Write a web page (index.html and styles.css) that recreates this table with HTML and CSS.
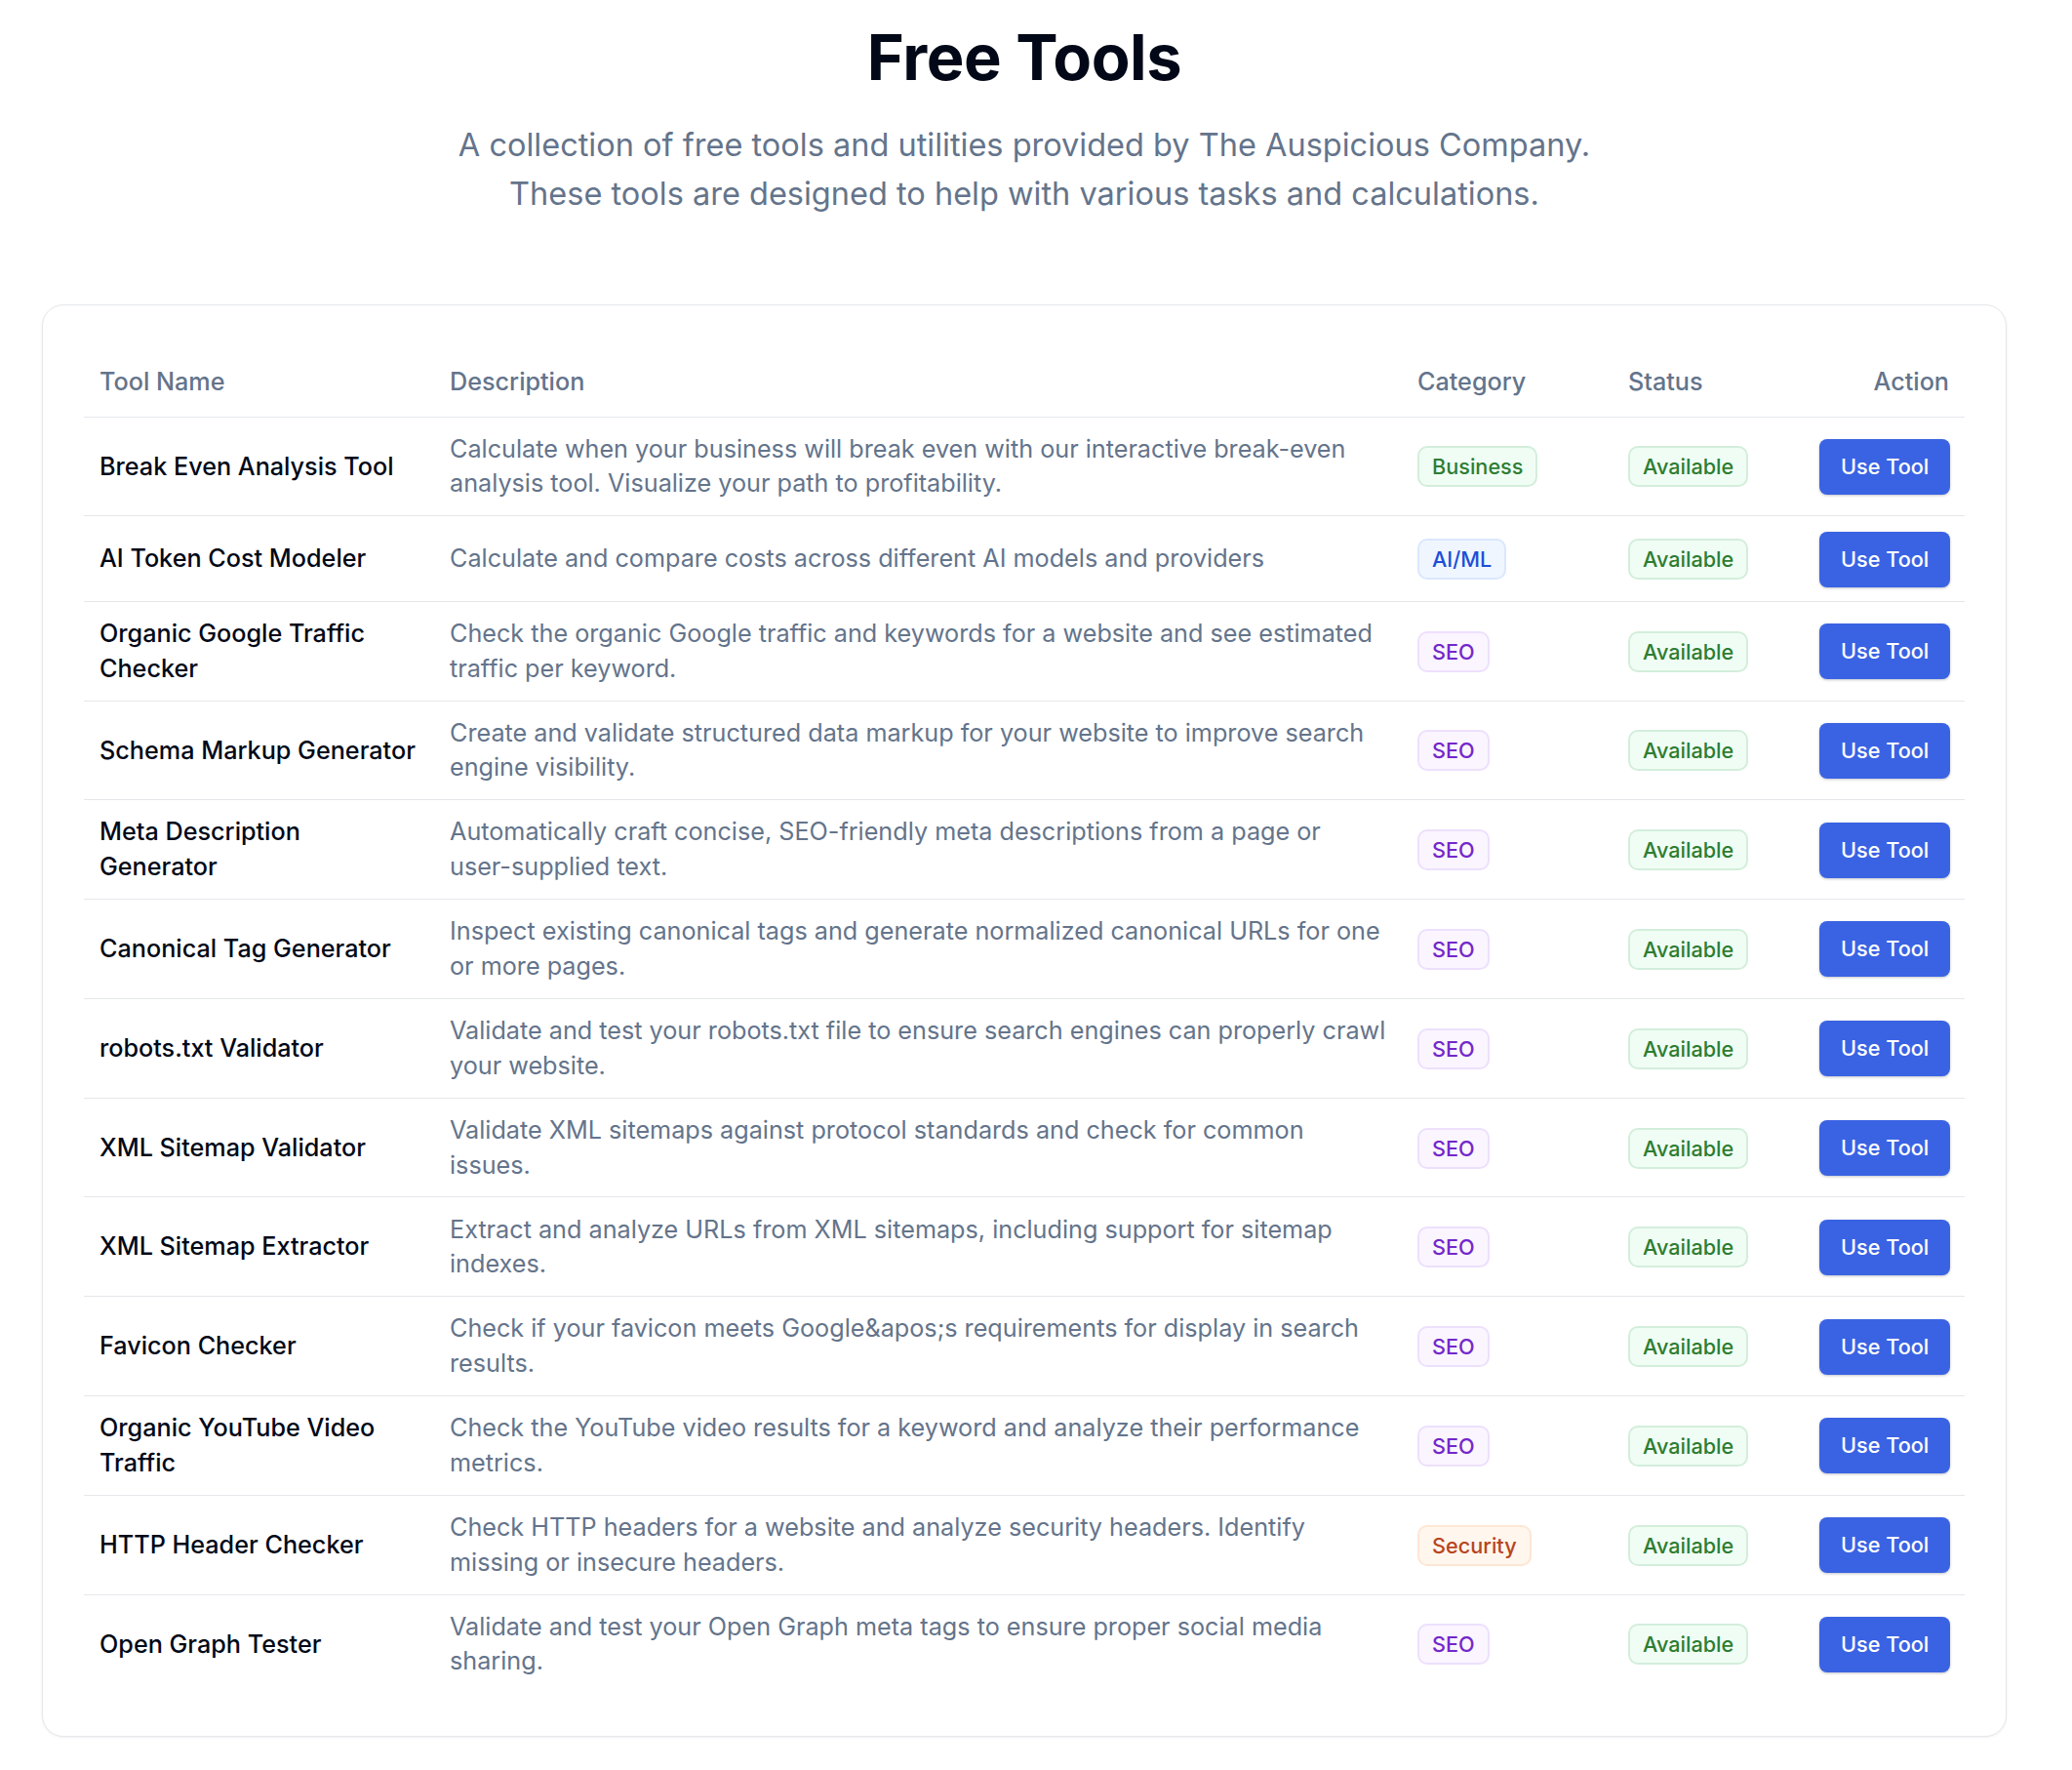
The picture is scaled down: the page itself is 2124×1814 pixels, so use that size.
FILE: index.html
```html
<!DOCTYPE html>
<html lang="en">
<head>
<meta charset="utf-8">
<title>Free Tools</title>
<link rel="stylesheet" href="styles.css">
</head>
<body>
<main class="page">
  <header class="hero">
    <h1 class="hero-title">Free Tools</h1>
    <p class="hero-sub">A collection of free tools and utilities provided by The Auspicious Company. These tools are designed to help with various tasks and calculations.</p>
  </header>

  <section class="card">
    <table class="tools">
      <colgroup>
        <col class="c-name">
        <col class="c-desc">
        <col class="c-cat">
        <col class="c-status">
        <col class="c-action">
      </colgroup>
      <thead>
        <tr>
          <th>Tool Name</th>
          <th>Description</th>
          <th>Category</th>
          <th>Status</th>
          <th class="right">Action</th>
        </tr>
      </thead>
      <tbody>
        <tr>
          <td class="name">Break Even Analysis Tool</td>
          <td class="desc">Calculate when your business will break even with our interactive break-even analysis tool. Visualize your path to profitability.</td>
          <td><span class="badge green">Business</span></td>
          <td><span class="badge green">Available</span></td>
          <td class="right"><a class="btn" href="#">Use Tool</a></td>
        </tr>
        <tr>
          <td class="name">AI Token Cost Modeler</td>
          <td class="desc">Calculate and compare costs across different AI models and providers</td>
          <td><span class="badge blue">AI/ML</span></td>
          <td><span class="badge green">Available</span></td>
          <td class="right"><a class="btn" href="#">Use Tool</a></td>
        </tr>
        <tr>
          <td class="name">Organic Google Traffic Checker</td>
          <td class="desc">Check the organic Google traffic and keywords for a website and see estimated traffic per keyword.</td>
          <td><span class="badge purple">SEO</span></td>
          <td><span class="badge green">Available</span></td>
          <td class="right"><a class="btn" href="#">Use Tool</a></td>
        </tr>
        <tr>
          <td class="name">Schema Markup Generator</td>
          <td class="desc">Create and validate structured data markup for your website to improve search engine visibility.</td>
          <td><span class="badge purple">SEO</span></td>
          <td><span class="badge green">Available</span></td>
          <td class="right"><a class="btn" href="#">Use Tool</a></td>
        </tr>
        <tr>
          <td class="name">Meta Description Generator</td>
          <td class="desc">Automatically craft concise, SEO-friendly meta descriptions from a page or <span class="nowrap">user-supplied</span> text.</td>
          <td><span class="badge purple">SEO</span></td>
          <td><span class="badge green">Available</span></td>
          <td class="right"><a class="btn" href="#">Use Tool</a></td>
        </tr>
        <tr>
          <td class="name">Canonical Tag Generator</td>
          <td class="desc">Inspect existing canonical tags and generate normalized canonical URLs for one or more pages.</td>
          <td><span class="badge purple">SEO</span></td>
          <td><span class="badge green">Available</span></td>
          <td class="right"><a class="btn" href="#">Use Tool</a></td>
        </tr>
        <tr>
          <td class="name">robots.txt Validator</td>
          <td class="desc">Validate and test your robots.txt file to ensure search engines can properly crawl your website.</td>
          <td><span class="badge purple">SEO</span></td>
          <td><span class="badge green">Available</span></td>
          <td class="right"><a class="btn" href="#">Use Tool</a></td>
        </tr>
        <tr>
          <td class="name">XML Sitemap Validator</td>
          <td class="desc">Validate XML sitemaps against protocol standards and check for common issues.</td>
          <td><span class="badge purple">SEO</span></td>
          <td><span class="badge green">Available</span></td>
          <td class="right"><a class="btn" href="#">Use Tool</a></td>
        </tr>
        <tr>
          <td class="name">XML Sitemap Extractor</td>
          <td class="desc">Extract and analyze URLs from XML sitemaps, including support for sitemap indexes.</td>
          <td><span class="badge purple">SEO</span></td>
          <td><span class="badge green">Available</span></td>
          <td class="right"><a class="btn" href="#">Use Tool</a></td>
        </tr>
        <tr>
          <td class="name">Favicon Checker</td>
          <td class="desc">Check if your favicon meets Google&amp;apos;s requirements for display in search results.</td>
          <td><span class="badge purple">SEO</span></td>
          <td><span class="badge green">Available</span></td>
          <td class="right"><a class="btn" href="#">Use Tool</a></td>
        </tr>
        <tr>
          <td class="name">Organic YouTube Video Traffic</td>
          <td class="desc">Check the YouTube video results for a keyword and analyze their performance metrics.</td>
          <td><span class="badge purple">SEO</span></td>
          <td><span class="badge green">Available</span></td>
          <td class="right"><a class="btn" href="#">Use Tool</a></td>
        </tr>
        <tr>
          <td class="name">HTTP Header Checker</td>
          <td class="desc">Check HTTP headers for a website and analyze security headers. Identify missing or insecure headers.</td>
          <td><span class="badge orange">Security</span></td>
          <td><span class="badge green">Available</span></td>
          <td class="right"><a class="btn" href="#">Use Tool</a></td>
        </tr>
        <tr>
          <td class="name">Open Graph Tester</td>
          <td class="desc">Validate and test your Open Graph meta tags to ensure proper social media sharing.</td>
          <td><span class="badge purple">SEO</span></td>
          <td><span class="badge green">Available</span></td>
          <td class="right"><a class="btn" href="#">Use Tool</a></td>
        </tr>
      </tbody>
    </table>
  </section>
</main>
</body>
</html>
```

FILE: styles.css
```css
* { box-sizing: border-box; }

html, body {
  margin: 0;
  padding: 0;
  background: #ffffff;
}

body {
  font-family: Inter, "Noto Sans", "Liberation Sans", sans-serif;
  color: #020817;
  -webkit-font-smoothing: antialiased;
}

.page {
  width: 2100px;
  padding: 26px 43px 36px;
}

.hero {
  display: flex;
  flex-direction: column;
  align-items: center;
  text-align: center;
}

.hero-title {
  margin: 0 0 33px;
  font-size: 65px;
  line-height: 65px;
  font-weight: 700;
  letter-spacing: -0.4px;
  color: #020817;
}

.hero-sub {
  margin: 0;
  max-width: 1213px;
  font-size: 32.5px;
  line-height: 50px;
  color: #64748b;
}

.card {
  margin-top: 88px;
  border: 1px solid #e5e7eb;
  border-radius: 22px;
  padding: 42px 42px 44px;
  background: #fff;
  box-shadow: 0 1px 3px rgba(15, 23, 42, 0.06);
}

.tools {
  width: 100%;
  border-collapse: collapse;
  table-layout: fixed;
  font-size: 25.2px;
  line-height: 35.7px;
}

.c-name { width: 359px; }
.c-desc { width: 992px; }
.c-cat { width: 216px; }
.c-status { width: 196px; }
.c-action { width: 165px; }

.tools th {
  text-align: left;
  font-weight: 500;
  color: #64748b;
  padding: 18.7px 16px 17.2px;
  border-bottom: 1px solid #e5e7eb;
}

.tools td {
  padding: 15.2px 16px 14.2px;
  vertical-align: middle;
  border-bottom: 1px solid #e5e7eb;
}

.tools tbody tr:last-child td {
  border-bottom: none;
}

.tools .right { text-align: right; }

.name {
  font-weight: 500;
  color: #020817;
}

.tools td.desc {
  color: #64748b;
  padding-right: 14px;
}

.nowrap { white-space: nowrap; }

.badge {
  display: inline-block;
  border: 2px solid;
  border-radius: 10px;
  padding: 5px 13px;
  font-size: 21.67px;
  line-height: 28px;
  font-weight: 500;
  white-space: nowrap;
  vertical-align: middle;
}

.green { background: #f0fdf4; border-color: #d3eedb; color: #2e7d32; }
.blue { background: #eff6ff; border-color: #dbe7fe; color: #1d4ed8; }
.purple { background: #faf5ff; border-color: #ede0fc; color: #7427c9; }
.orange { background: #fff7ed; border-color: #fde6d4; color: #b8451d; }

.btn {
  display: inline-block;
  height: 57px;
  padding: 0 22px;
  border-radius: 8px;
  background: #3a63e3;
  color: #ffffff;
  font-weight: 500;
  font-size: 21.67px;
  line-height: 57px;
  text-decoration: none;
  white-space: nowrap;
  box-shadow: 0 1px 3px rgba(15, 23, 42, 0.18), 0 1px 2px rgba(15, 23, 42, 0.08);
  vertical-align: middle;
}
```
